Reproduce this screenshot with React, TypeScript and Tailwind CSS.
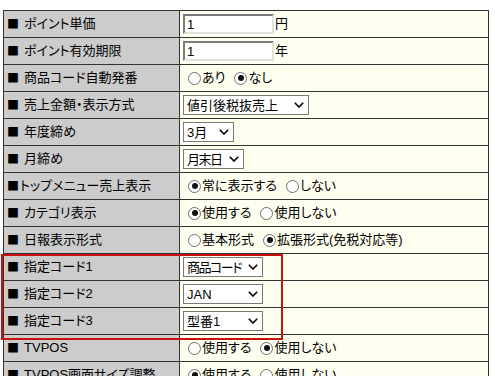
import React from 'react';

type Cell =
  | { kind: 'input'; value: string; unit: string }
  | { kind: 'select'; value: string; width: string; tight?: boolean }
  | { kind: 'radio'; options: { label: string; checked: boolean }[] };

type Row = { label: string; spaced: boolean; cell: Cell };

const rows: Row[] = [
  { label: 'ポイント単価', spaced: true, cell: { kind: 'input', value: '1', unit: '円' } },
  { label: 'ポイント有効期限', spaced: true, cell: { kind: 'input', value: '1', unit: '年' } },
  {
    label: '商品コード自動発番',
    spaced: true,
    cell: { kind: 'radio', options: [{ label: 'あり', checked: false }, { label: 'なし', checked: true }] },
  },
  { label: '売上金額・表示方式', spaced: true, cell: { kind: 'select', value: '値引後税抜売上', width: 'w-[126px]' } },
  { label: '年度締め', spaced: true, cell: { kind: 'select', value: '3月', width: 'w-[51px]' } },
  { label: '月締め', spaced: true, cell: { kind: 'select', value: '月末日', width: 'w-[61px]', tight: true } },
  {
    label: 'トップメニュー売上表示',
    spaced: false,
    cell: { kind: 'radio', options: [{ label: '常に表示する', checked: true }, { label: 'しない', checked: false }] },
  },
  {
    label: 'カテゴリ表示',
    spaced: true,
    cell: { kind: 'radio', options: [{ label: '使用する', checked: true }, { label: '使用しない', checked: false }] },
  },
  {
    label: '日報表示形式',
    spaced: true,
    cell: {
      kind: 'radio',
      options: [
        { label: '基本形式', checked: false },
        { label: '拡張形式(免税対応等)', checked: true },
      ],
    },
  },
  { label: '指定コード1', spaced: true, cell: { kind: 'select', value: '商品コード', width: 'w-[80px]', tight: true } },
  { label: '指定コード2', spaced: true, cell: { kind: 'select', value: 'JAN', width: 'w-[80px]' } },
  { label: '指定コード3', spaced: true, cell: { kind: 'select', value: '型番1', width: 'w-[80px]' } },
  {
    label: 'TVPOS',
    spaced: true,
    cell: { kind: 'radio', options: [{ label: '使用する', checked: false }, { label: '使用しない', checked: true }] },
  },
  {
    label: 'TVPOS画面サイズ調整',
    spaced: true,
    cell: { kind: 'radio', options: [{ label: '使用する', checked: true }, { label: '使用しない', checked: false }] },
  },
];

const Radio: React.FC<{ checked: boolean }> = ({ checked }) => (
  <span className="w-[13px] h-[13px] rounded-full border border-[#6f6f6f] bg-white flex items-center justify-center shrink-0">
    {checked && <span className="w-[6px] h-[6px] rounded-full bg-[#111]" />}
  </span>
);

const Select: React.FC<{ value: string; width: string; tight?: boolean }> = ({ value, width, tight }) => (
  <div className={`${width} h-[20px] border border-[#7a7a7a] bg-white flex items-center pl-[3px] pr-[4px]`}>
    <span className={`leading-none flex-1 whitespace-nowrap ${tight ? 'tracking-[-1.5px]' : ''}`}>{value}</span>
    <svg width="10" height="6" viewBox="0 0 10 6" className="shrink-0 ml-[3px]">
      <polyline points="0.8,0.8 5,5 9.2,0.8" fill="none" stroke="#000" strokeWidth="1.6" />
    </svg>
  </div>
);

const CellContent: React.FC<{ cell: Cell }> = ({ cell }) => {
  if (cell.kind === 'input') {
    return (
      <div className="flex items-center">
        <div className="w-[91px] h-[20px] bg-white border-2 border-t-[#7c7c7c] border-l-[#7c7c7c] border-b-[#e2e2e2] border-r-[#e2e2e2] flex items-center pl-[2px]">
          <span className="leading-none">{cell.value}</span>
        </div>
        <span className="ml-[1px]">{cell.unit}</span>
      </div>
    );
  }
  if (cell.kind === 'select') {
    return <Select value={cell.value} width={cell.width} tight={cell.tight} />;
  }
  return (
    <div className="flex items-center">
      {cell.options.map((o, i) => (
        <div key={o.label} className={`flex items-center ${i === 0 ? 'ml-[5px]' : 'ml-[9px]'}`}>
          <Radio checked={o.checked} />
          <span className="ml-[1px]">{o.label}</span>
        </div>
      ))}
    </div>
  );
};

const App: React.FC = () => {
  return (
    <div className="relative w-[495px] h-[376px] overflow-hidden bg-white text-black text-[13px] font-['Liberation_Sans','Noto_Sans_CJK_JP',sans-serif] [font-feature-settings:'palt']">
      <div className="ml-[3px] mt-[10px] w-[486px] border-t border-l border-r border-[#333]">
        {rows.map((r) => (
          <div key={r.label} className="grid grid-cols-[176px_1fr] h-[27px] border-b border-[#333]">
            <div className="bg-[#cccccc] border-r border-[#333] flex items-center pl-[3px] whitespace-nowrap">
              <span className={`font-['Noto_Sans_CJK_JP',sans-serif] [font-feature-settings:normal] text-[12px] ${r.spaced ? 'mr-[5px]' : 'mr-[1px]'}`}>
                ■
              </span>
              {r.label}
            </div>
            <div className="bg-[#fffff0] flex items-center pl-[3px] whitespace-nowrap">
              <CellContent cell={r.cell} />
            </div>
          </div>
        ))}
      </div>

      {/* highlight box */}
      <div className="absolute left-[1px] top-[254px] w-[282px] h-[86px] border-2 border-[#cc1010]" />
    </div>
  );
};

export default App;
